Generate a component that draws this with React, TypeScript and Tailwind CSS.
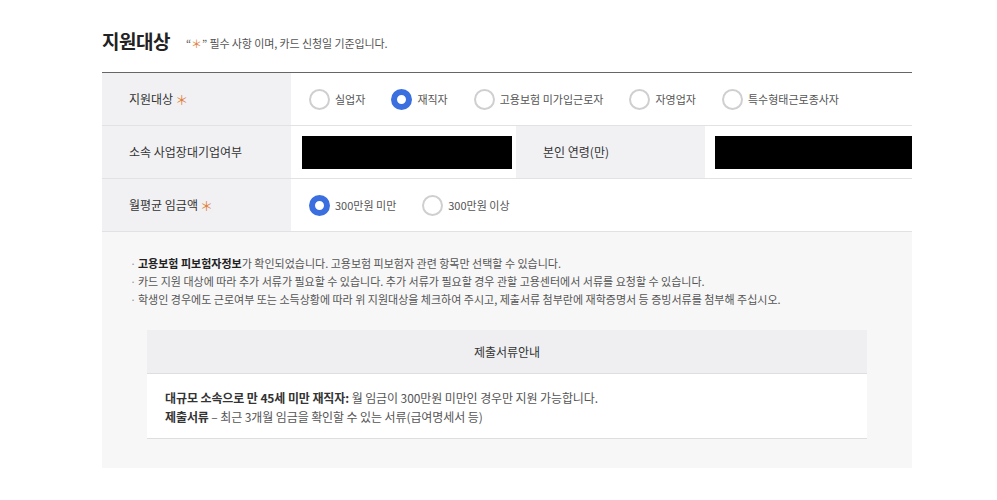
import React from 'react'

const font = { fontFamily: '"Noto Sans CJK KR", "Noto Sans", sans-serif' }

function Radio({ label, checked }: { label: string; checked?: boolean }) {
  return (
    <label className="flex items-center mr-[26px]">
      <span
        className={
          checked
            ? 'w-[21px] h-[21px] rounded-full border-[6px] border-[#3b6fdf] bg-white box-border'
            : 'w-[21px] h-[21px] rounded-full border-2 border-[#cfcfd2] bg-white box-border'
        }
      />
      <span className="ml-[5px] text-[11px] text-[#555]">{label}</span>
    </label>
  )
}

function Star() {
  return <span className="ml-[2px] text-[#e0803c] text-[13px] leading-none">＊</span>
}

const targets = ['실업자', '재직자', '고용보험 미가입근로자', '자영업자', '특수형태근로종사자']

export default function App() {
  return (
    <div className="w-[997px] h-[500px] bg-white" style={font}>
      <div className="pl-[102px] pr-[85px] pt-[28px]">
        {/* Title */}
        <div className="flex items-end h-[26px]">
          <h2 className="text-[19px] font-bold text-[#222] leading-[26px] tracking-[-0.5px]">지원대상</h2>
          <p className="ml-4 mb-[3px] text-[11px] text-[#555] tracking-[-0.1px]">
            “<span className="text-[#e0803c]">＊</span>” 필수 사항 이며, 카드 신청일 기준입니다.
          </p>
        </div>

        {/* Form table */}
        <div className="mt-[18px] border-t border-[#666]">
          <div className="flex h-[53px] border-b border-[#e2e2e4]">
            <div className="w-[189px] bg-[#f1f1f3] flex items-center pl-[27px] text-[12px] text-[#333]">
              지원대상
              <Star />
            </div>
            <div className="flex items-center pl-[18px]">
              {targets.map(t => (
                <Radio key={t} label={t} checked={t === '재직자'} />
              ))}
            </div>
          </div>

          <div className="flex h-[53px] border-b border-[#e2e2e4]">
            <div className="w-[189px] bg-[#f1f1f3] flex items-center pl-[27px] text-[12px] text-[#333]">
              소속 사업장대기업여부
            </div>
            <div className="w-[225px] flex items-center pl-[11px]">
              <div className="w-[210px] h-[33px] bg-black" />
            </div>
            <div className="w-[189px] bg-[#f1f1f3] flex items-center pl-[27px] text-[12px] text-[#333]">
              본인 연령(만)
            </div>
            <div className="flex-1 flex items-center pl-[10px]">
              <div className="w-full h-[33px] bg-black" />
            </div>
          </div>

          <div className="flex h-[53px] border-b border-[#e2e2e4]">
            <div className="w-[189px] bg-[#f1f1f3] flex items-center pl-[27px] text-[12px] text-[#333]">
              월평균 임금액
              <Star />
            </div>
            <div className="flex items-center pl-[18px]">
              <Radio label="300만원 미만" checked />
              <Radio label="300만원 이상" />
            </div>
          </div>
        </div>

        {/* Info */}
        <div className="bg-[#f7f7f7] h-[236px] pt-[22px] pl-[28px] pr-[45px]">
          <ul className="text-[11px] text-[#555] leading-[18px]">
            <li className="flex">
              <span className="w-[8px] text-[#999]">·</span>
              <span>
                <b className="font-bold text-[#222]">고용보험 피보험자정보</b>가 확인되었습니다. 고용보험 피보험자 관련 항목만 선택할 수 있습니다.
              </span>
            </li>
            <li className="flex">
              <span className="w-[8px] text-[#999]">·</span>
              <span>카드 지원 대상에 따라 추가 서류가 필요할 수 있습니다. 추가 서류가 필요할 경우 관할 고용센터에서 서류를 요청할 수 있습니다.</span>
            </li>
            <li className="flex">
              <span className="w-[8px] text-[#999]">·</span>
              <span>학생인 경우에도 근로여부 또는 소득상황에 따라 위 지원대상을 체크하여 주시고, 제출서류 첨부란에 재학증명서 등 증빙서류를 첨부해 주십시오.</span>
            </li>
          </ul>

          <div className="mt-[22px] ml-[17px] w-[720px]">
            <div className="h-[44px] bg-[#efeff1] border-b border-[#dedee0] flex items-center justify-center text-[12px] text-[#333]">
              제출서류안내
            </div>
            <div className="h-[65px] bg-white border-b border-[#dedee0] pl-[18px] pt-[14px] text-[12px] text-[#555] leading-[19px] tracking-[-0.1px]">
              <p>
                <b className="font-bold text-[#333]">대규모 소속으로 만 45세 미만 재직자:</b> 월 임금이 300만원 미만인 경우만 지원 가능합니다.
              </p>
              <p>
                <b className="font-bold text-[#333]">제출서류</b> – 최근 3개월 임금을 확인할 수 있는 서류(급여명세서 등)
              </p>
            </div>
          </div>
        </div>
      </div>
    </div>
  )
}
